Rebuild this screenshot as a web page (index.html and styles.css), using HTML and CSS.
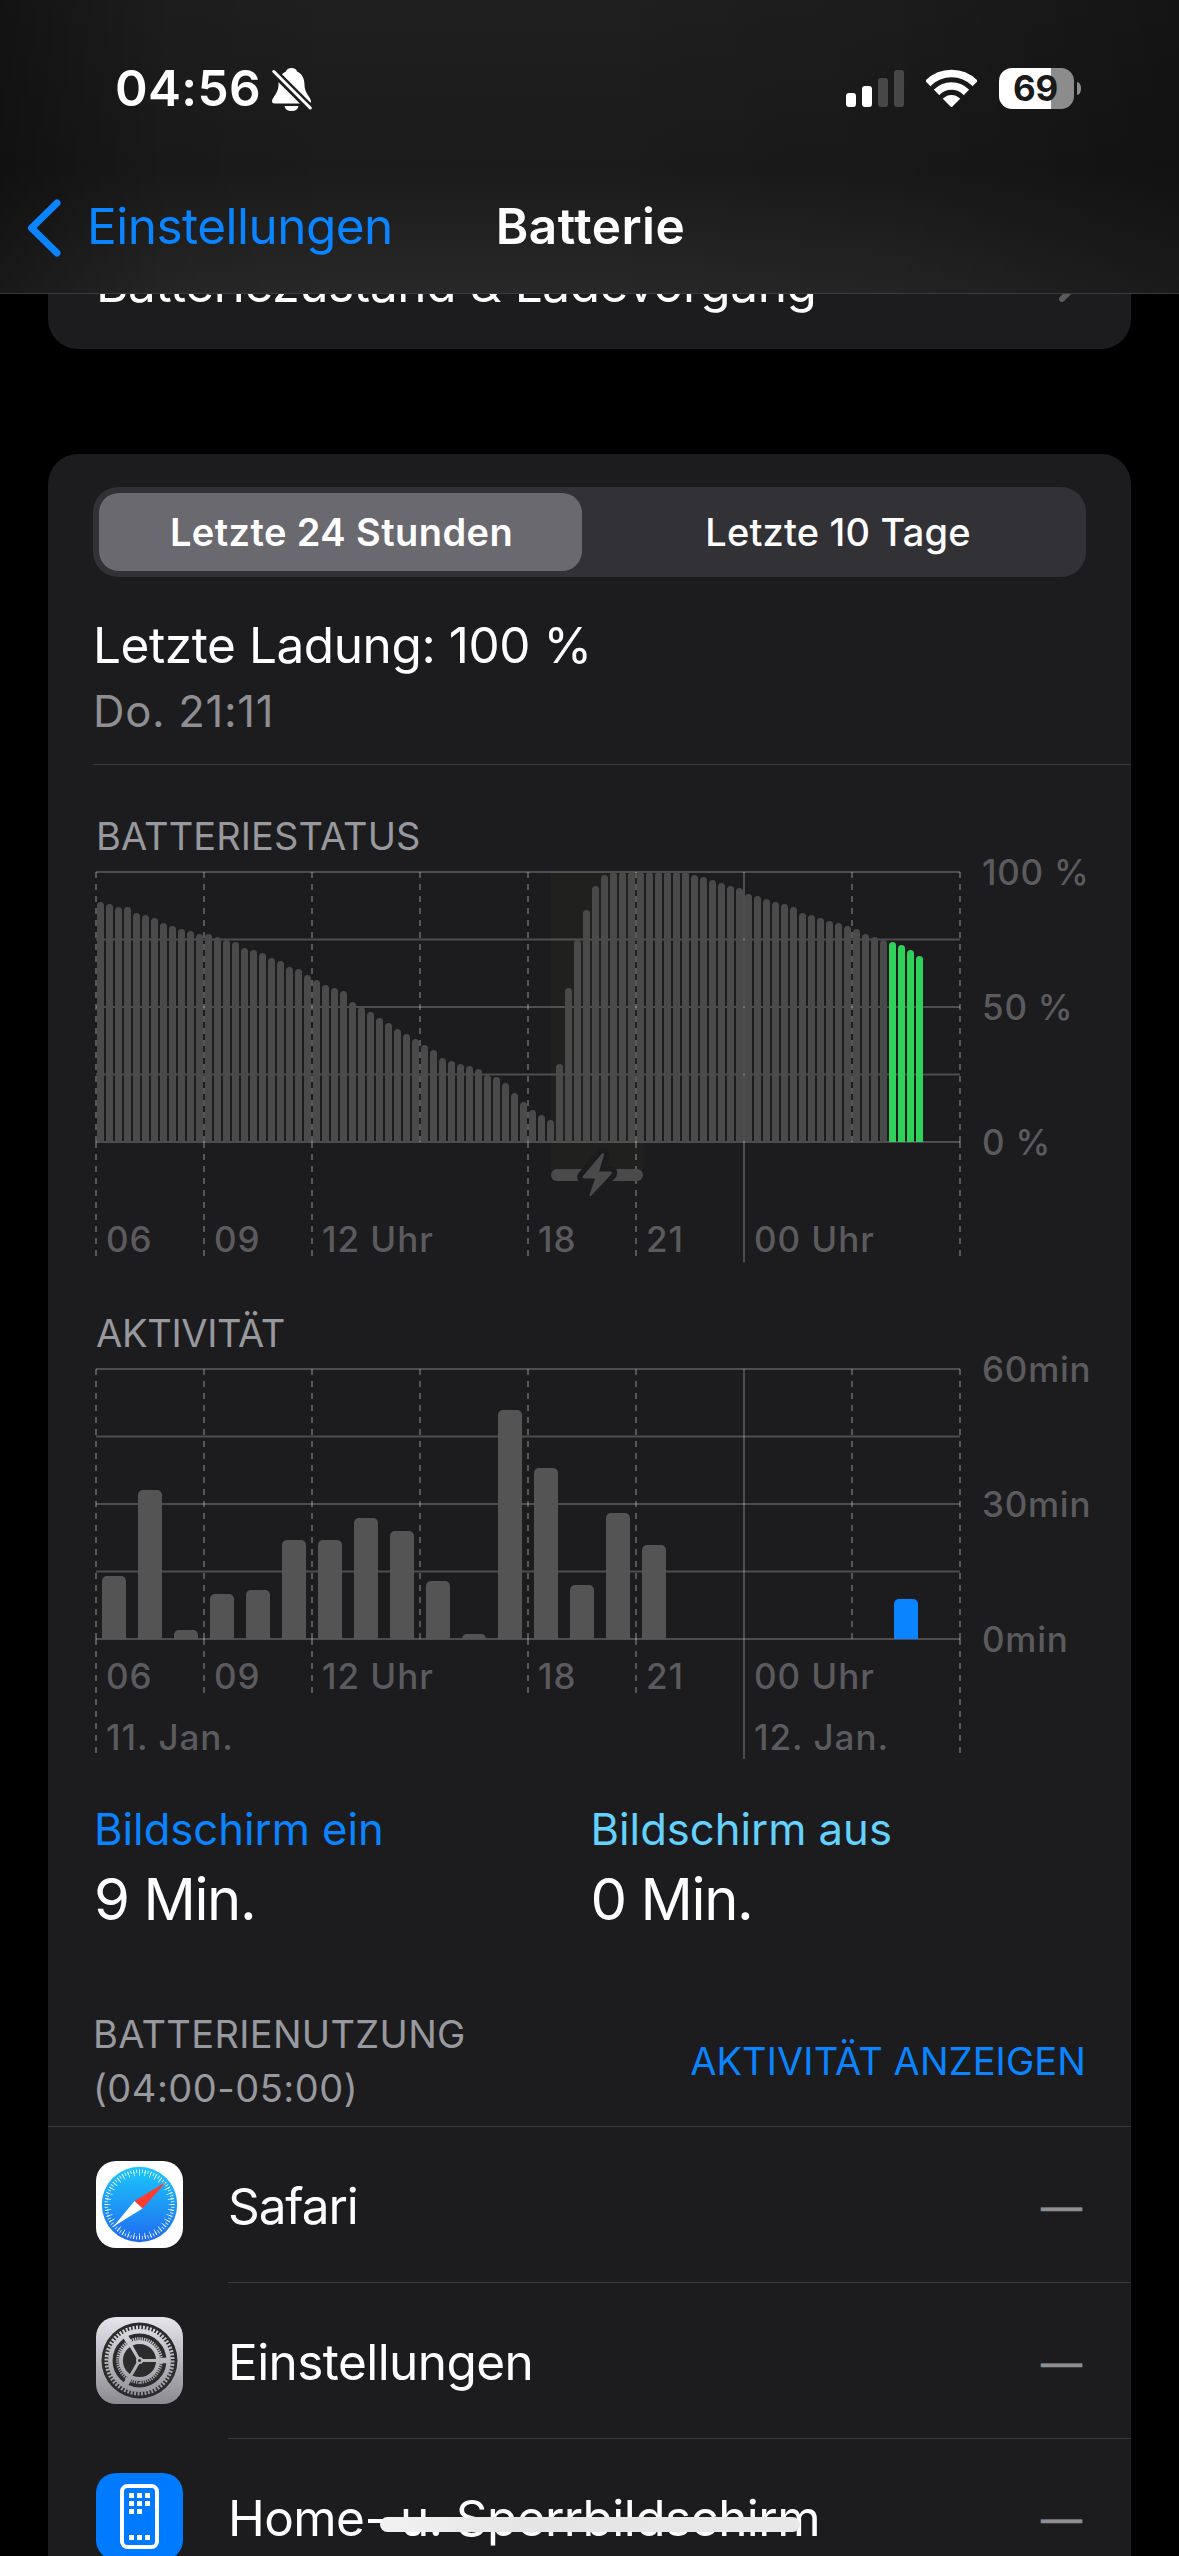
FILE: index.html
```
<!DOCTYPE html>
<html lang="de">
<head>
<meta charset="utf-8">
<title>Batterie</title>
<link rel="stylesheet" href="styles.css">
</head>
<body>
<div class="screen">
  <header class="header">
    <div class="status">
      <div class="status-left">
        <span class="clock">04:56</span>
        <svg class="bell" viewBox="0 0 40 43" width="40" height="43">
          <path fill="#fff" d="M19.5 0c-3 0-5 1.5-5.5 3.5C8.500 6 6.500 11 6.500 17c0 8-6 12-6.500 16q0 2.500 2.500 2.500h34q2.500 0 2.500-2.500c-.5-4-6.500-8-6.500-16 0-6-2-11-7.500-13.500C24.500 1.500 22.500 0 19.500 0z"/>
          <path fill="#fff" d="M12.500 38h14c-.5 3-3 5-7 5s-6.500-2-7-5z"/>
          <path stroke="#1d1d1d" stroke-width="8" d="M-1 1 41 43"/>
          <path stroke="#fff" stroke-width="3" stroke-linecap="round" d="M1.800 3.500 38.300 40"/>
        </svg>
      </div>
      <div class="status-right">
        <div class="signal"><i class="s1"></i><i class="s2"></i><i class="s3"></i><i class="s4"></i></div>
        <svg class="wifi" viewBox="0 0 51 38" width="51" height="38">
          <defs><clipPath id="fan"><path d="M25.500 38.500-14-1.500V-5h79v3.500z"/></clipPath></defs>
          <g clip-path="url(#fan)" fill="none" stroke="#fff" stroke-width="7.500">
            <circle cx="25.500" cy="37.500" r="33"/>
            <circle cx="25.500" cy="37.500" r="20.500"/>
            <circle cx="25.500" cy="37.500" r="11.500" fill="#fff" stroke="none"/>
          </g>
        </svg>
        <div class="battery"><span class="battery-body">69</span><span class="battery-cap"></span></div>
      </div>
    </div>
    <nav class="nav">
      <a class="back">
        <svg viewBox="0 0 34 58" width="34" height="58"><path d="M30 4 4.500 29 30 54" fill="none" stroke="#0a84ff" stroke-width="7" stroke-linecap="round" stroke-linejoin="round"/></svg>
        <span>Einstellungen</span>
      </a>
      <h1 class="title">Batterie</h1>
    </nav>
  </header>

  <main class="content">
    <section class="card health">
      <span class="health-label">Batteriezustand &amp; Ladevorgang</span>
      <svg viewBox="0 0 22 36" width="22" height="36"><path d="M3 3 18 18 3 33" fill="none" stroke="#5b5b5f" stroke-width="6" stroke-linecap="round" stroke-linejoin="round"/></svg>
    </section>

    <section class="card usage">
      <div class="segmented">
        <button class="segment active">Letzte 24 Stunden</button>
        <button class="segment">Letzte 10 Tage</button>
      </div>
      <div class="charge">
        <div class="charge-title">Letzte Ladung: 100 %</div>
        <div class="charge-time">Do. 21:11</div>
      </div>

      <h2 class="chart-title">BATTERIESTATUS</h2>
      <div class="chart">
        <div class="graph">
          <svg class="lines" viewBox="-1 -1 868 392" width="868" height="392">
            <rect x="455" y="0" width="92" height="298" fill="#20201f"/>
            <path class="rule" d="M0 0H864M0 67.500H864M0 135H864M0 202.500H864M0 270H864"/>
            <path class="dash" d="M0 0V270M108 0V270M216 0V270M324 0V270M432 0V270M540 0V270M756 0V270M864 0V270"/>
            <path class="dash" d="M0 270V384M108 270V384M216 270V384M432 270V384M540 270V384M864 270V384"/>
            <path class="rule" d="M648 0V390"/>
            <rect x="455" y="297" width="92" height="12" rx="6" fill="#4a4a4a"/>
            <path d="M506 281.500 487 304q-1 2 1 2.500H499L493.500 323q0 2 1.500 1L515.500 302q1-2-1-2.500H503L508 283q0-2.500-2-1.500z" fill="#4a4a4a" stroke="#1c1c1e" stroke-width="11" stroke-linejoin="round" paint-order="stroke"/>
          </svg>
          <div class="bars level">
            <i style="height:89%"></i><i style="height:88%"></i><i style="height:87%"></i><i style="height:87%"></i><i style="height:85%"></i><i style="height:84%"></i><i style="height:83%"></i><i style="height:81%"></i><i style="height:80%"></i><i style="height:79%"></i><i style="height:78%"></i><i style="height:77%"></i>
            <i style="height:77%"></i><i style="height:76%"></i><i style="height:75%"></i><i style="height:74%"></i><i style="height:72%"></i><i style="height:71%"></i><i style="height:70%"></i><i style="height:68%"></i><i style="height:67%"></i><i style="height:65%"></i><i style="height:64%"></i><i style="height:62%"></i>
            <i style="height:60%"></i><i style="height:58%"></i><i style="height:57%"></i><i style="height:56%"></i><i style="height:52%"></i><i style="height:50%"></i><i style="height:48%"></i><i style="height:46%"></i><i style="height:44%"></i><i style="height:42%"></i><i style="height:40%"></i><i style="height:38%"></i>
            <i style="height:36%"></i><i style="height:34%"></i><i style="height:31%"></i><i style="height:30%"></i><i style="height:29%"></i><i style="height:28%"></i><i style="height:27%"></i><i style="height:25%"></i><i style="height:24%"></i><i style="height:22%"></i><i style="height:18%"></i><i style="height:15%"></i>
            <i style="height:12%"></i><i style="height:10%"></i><i style="height:8%"></i><i style="height:29%"></i><i style="height:57%"></i><i style="height:75%"></i><i style="height:86%"></i><i style="height:95%"></i><i style="height:99%"></i><i style="height:100%"></i><i style="height:100%"></i><i style="height:100%"></i>
            <i style="height:100%"></i><i style="height:100%"></i><i style="height:100%"></i><i style="height:100%"></i><i style="height:100%"></i><i style="height:100%"></i><i style="height:99%"></i><i style="height:98%"></i><i style="height:97%"></i><i style="height:96%"></i><i style="height:95%"></i><i style="height:94%"></i>
            <i style="height:92%"></i><i style="height:91%"></i><i style="height:90%"></i><i style="height:89%"></i><i style="height:88%"></i><i style="height:87%"></i><i style="height:85%"></i><i style="height:84%"></i><i style="height:83%"></i><i style="height:82%"></i><i style="height:81%"></i><i style="height:80%"></i>
            <i style="height:79%"></i><i style="height:77%"></i><i style="height:76%"></i><i style="height:75%"></i><i class="now" style="height:74%"></i><i class="now" style="height:73%"></i><i class="now" style="height:71%"></i><i class="now" style="height:69%"></i>
          </div>
          <div class="axis axis-level">
            <span>06</span><span>09</span><span class="wide">12 Uhr</span><span>18</span><span>21</span><span class="wide">00 Uhr</span>
          </div>
        </div>
        <div class="scale"><span>100 %</span><span>50 %</span><span>0 %</span></div>
      </div>

      <h2 class="chart-title tight">AKTIVITÄT</h2>
      <div class="chart">
        <div class="graph">
          <svg class="lines" viewBox="-1 -1 868 392" width="868" height="392">
            <path class="rule" d="M0 0H864M0 67.500H864M0 135H864M0 202.500H864M0 270H864"/>
            <path class="dash" d="M0 0V270M108 0V270M216 0V270M324 0V270M432 0V270M540 0V270M756 0V270M864 0V270"/>
            <path class="dash" d="M0 270V384M108 270V324M216 270V324M432 270V324M540 270V324M864 270V384"/>
            <path class="rule" d="M648 0V390"/>
          </svg>
          <div class="bars activity">
            <i style="height:63px"></i><i style="height:149px"></i><i style="height:9px"></i><i style="height:45px"></i><i style="height:49px"></i><i style="height:99px"></i><i style="height:99px"></i><i style="height:121px"></i><i style="height:108px"></i><i style="height:58px"></i><i style="height:5px"></i><i style="height:229px"></i>
            <i style="height:171px"></i><i style="height:54px"></i><i style="height:126px"></i><i style="height:94px"></i><i style="height:0"></i><i style="height:0"></i><i style="height:0"></i><i style="height:0"></i><i style="height:0"></i><i style="height:0"></i><i class="now" style="height:40px"></i>
          </div>
          <div class="axis axis-activity">
            <span>06</span><span>09</span><span class="wide">12 Uhr</span><span>18</span><span>21</span><span class="wide">00 Uhr</span>
            <span class="day">11. Jan.</span><span class="wide">12. Jan.</span>
          </div>
        </div>
        <div class="scale"><span>60min</span><span>30min</span><span>0min</span></div>
      </div>

      <div class="stats">
        <div class="stat"><div class="stat-name on">Bildschirm ein</div><div class="stat-value">9 Min.</div></div>
        <div class="stat"><div class="stat-name off">Bildschirm aus</div><div class="stat-value">0 Min.</div></div>
      </div>

      <div class="list-head">
        <div class="list-title">BATTERIENUTZUNG<br><span class="hours">(04:00-05:00)</span></div>
        <a class="list-action">AKTIVITÄT ANZEIGEN</a>
      </div>

      <div class="row">
        <svg class="app" viewBox="0 0 87 87" width="87" height="87">
          <defs><linearGradient id="sky" x1="0" y1="0" x2="0" y2="1"><stop offset="0" stop-color="#1cc8fb"/><stop offset="1" stop-color="#1f6af0"/></linearGradient></defs>
          <rect width="87" height="87" rx="20" fill="#fff"/>
          <circle cx="43.500" cy="43.500" r="37.700" fill="url(#sky)"/>
          <g fill="none" stroke="#fff" stroke-opacity=".85">
            <circle cx="43.500" cy="43.500" r="33.300" stroke-width="3.500" pathLength="288" stroke-dasharray="1.200 2.800" stroke-dashoffset=".6"/>
            <circle cx="43.500" cy="43.500" r="31.800" stroke-width="6" pathLength="288" stroke-dasharray="1.200 6.800" stroke-dashoffset=".6"/>
          </g>
          <path fill="#ff3b30" d="M70 21 38.500 40 46.500 47.500z"/>
          <path fill="#fff" d="M17.500 65.500 38.500 40 46.500 47.500z"/>
        </svg>
        <div class="row-body"><span class="app-name safari">Safari</span><span class="value">—</span></div>
      </div>
      <div class="row">
        <svg class="app" viewBox="0 0 87 87" width="87" height="87">
          <defs><linearGradient id="steel" gradientUnits="userSpaceOnUse" x1="0" y1="0" x2="0" y2="87"><stop offset="0" stop-color="#e6e5eb"/><stop offset="1" stop-color="#8c8b91"/></linearGradient></defs>
          <rect width="87" height="87" rx="20" fill="url(#steel)"/>
          <circle cx="43.500" cy="43.500" r="38" fill="#2c2c2d"/>
          <g fill="none" stroke="url(#steel)">
            <circle cx="43.500" cy="43.500" r="29.200" stroke-width="4.500"/>
            <circle cx="43.500" cy="43.500" r="33" stroke-width="4" pathLength="240" stroke-dasharray="2.200 1.800"/>
            <circle cx="43.500" cy="43.500" r="18.600" stroke-width="4"/>
            <circle cx="43.500" cy="43.500" r="21.800" stroke-width="3" pathLength="240" stroke-dasharray="2.200 1.800"/>
            <path stroke-width="3.200" d="M43.500 43.500H72M43.500 43.500 29.200 18.700M43.500 43.500 29.200 68.300"/>
            <path stroke-width="5.500" d="M64 43.500H71M33.200 25.700 29.700 19.700M33.200 61.300 29.700 67.300"/>
          </g>
          <circle cx="43.500" cy="43.500" r="3.500" fill="url(#steel)"/>
          <circle cx="43.500" cy="43.500" r="1.500" fill="#2c2c2d"/>
        </svg>
        <div class="row-body"><span class="app-name">Einstellungen</span><span class="value">—</span></div>
      </div>
      <div class="row">
        <svg class="app" viewBox="0 0 87 87" width="87" height="87">
          <rect width="87" height="87" rx="20" fill="#007aff"/>
          <rect x="26" y="13" width="35" height="61" rx="5.500" fill="none" stroke="#fff" stroke-width="4"/>
          <path fill="#fff" d="M33 20h5v5h-5zM41 20h5v5h-5zM49 20h5v5h-5zM33 28h5v5h-5zM41 28h5v5h-5zM49 28h5v5h-5zM33 36h5v5h-5zM41 36h5v5h-5zM33 62h5v5h-5zM41 62h5v5h-5zM49 62h5v5h-5z"/>
        </svg>
        <div class="row-body"><span class="app-name">Home- u. Sperrbildschirm</span><span class="value">—</span></div>
      </div>
    </section>
  </main>
  <div class="home-indicator"></div>
</div>
</body>
</html>
```
FILE: styles.css
```
* { box-sizing: border-box; }
body { margin: 0; background: #000; color: #fff; font-family: Inter, "Liberation Sans", sans-serif; }
h1, h2 { margin: 0; }
svg { display: block; flex: none; }
.screen { position: relative; width: 1179px; height: 2556px; overflow: hidden; display: flex; flex-direction: column; }

/* status bar and navigation */
.header {
  flex: none; height: 294px; border-bottom: 1px solid #3a3a3b;
  background:
    linear-gradient(90deg, rgba(0,0,0,.38), rgba(0,0,0,.08) 14%, transparent 30%, transparent 50%, rgba(0,0,0,.1) 75%, rgba(0,0,0,.35)),
    linear-gradient(#1f1f1f, #1b1b1b 58%, #282828);
}
.status { height: 162px; padding: 14px 98px 0 115px; display: flex; justify-content: space-between; align-items: center; }
.status-left, .status-right { display: flex; align-items: center; }
.clock { font-size: 49.5px; font-weight: 600; letter-spacing: .34px; line-height: 60px; }
.bell { margin-left: 11px; margin-top: 2px; overflow: hidden; }
.signal { display: flex; align-items: flex-end; gap: 6px; height: 37px; }
.signal i { width: 10px; border-radius: 3px; background: #fff; }
.signal .s1 { height: 14px; }
.signal .s2 { height: 21px; }
.signal .s3 { height: 29px; background: #474747; }
.signal .s4 { height: 37px; background: #474747; }
.wifi { margin-left: 22px; }
.battery { margin-left: 22px; display: flex; align-items: center; gap: 3px; }
.battery-body {
  width: 75px; height: 41px; border-radius: 13px; padding-right: 2px;
  background: linear-gradient(90deg, #fff 52px, #8c8c8c 52px);
  color: #1a1a1a; font-size: 35px; font-weight: 700; line-height: 41px; text-align: center; letter-spacing: -.2px;
}
.battery-cap { width: 4px; height: 13px; border-radius: 0 4px 4px 0 / 0 6px 6px 0; background: #8c8c8c; }
.nav { height: 131px; display: grid; grid-template-columns: 1fr auto 1fr; align-items: center; }
.back { display: flex; align-items: center; gap: 26px; padding-left: 27px; color: #0a84ff; font-size: 49.5px; letter-spacing: -.53px; }
.back span { padding-bottom: 3px; }
.title { font-size: 49.5px; font-weight: 600; letter-spacing: .5px; padding: 0 0 3px 2px; }

/* scrolling content */
.content { flex: 1; min-height: 0; overflow: hidden; padding: 0 48px; display: flex; flex-direction: column; }
.card { flex: none; background: #1c1c1e; border-radius: 30px; }
.health { height: 132px; margin-top: -77px; padding: 2px 50px 0 48px; display: flex; align-items: center; justify-content: space-between; }
.health-label { font-size: 49.5px; letter-spacing: -.38px; }
.usage { margin-top: 105px; padding-top: 33px; height: 2300px; }
.segmented { margin: 0 45px; height: 90px; padding: 6px; border-radius: 25px; background: #323136; display: grid; grid-template-columns: 483px 1fr; }
.segment { border: 0; padding: 0 0 0 14px; background: none; border-radius: 20px; color: #fff; font: 500 38px/78px Inter, sans-serif; letter-spacing: .19px; }
.segment.active { padding-left: 2px; background: #6a696f; font-weight: 600; letter-spacing: .42px; }
.charge { margin: 35px 0 0 45px; padding-bottom: 24px; border-bottom: 1px solid #3b3b3e; }
.charge-title { font-size: 49.5px; line-height: 66px; letter-spacing: -.42px; }
.charge-time { margin-top: 6px; font-size: 43.6px; line-height: 56px; letter-spacing: .7px; color: #8e8e93; }

/* charts */
.chart-title { margin: 46px 0 0 48px; font-size: 38px; line-height: 50px; font-weight: 400; letter-spacing: .1px; color: #98989f; }
.chart-title.tight { letter-spacing: -.3px; }
.chart { margin: 11px 0 0 48px; display: grid; grid-template-columns: 864px auto; justify-content: start; }
.graph { position: relative; height: 390px; }
.lines { position: absolute; left: -1px; top: -1px; }
.rule { fill: none; stroke: #fff; stroke-opacity: .22; stroke-width: 2; }
.dash { fill: none; stroke: #fff; stroke-opacity: .26; stroke-width: 2; stroke-dasharray: 6 6; }
.bars { position: relative; height: 270px; display: flex; align-items: flex-end; }
.level { padding-left: 1px; gap: 2px; }
.level i { width: 7px; flex: none; background: #4a4a4a; border-radius: 3.5px 3.5px 0 0; }
.level .now { background: #30d158; }
.activity { padding-left: 6px; gap: 12px; }
.activity i { width: 24px; flex: none; background: #545454; border-radius: 5px 5px 0 0; }
.activity .now { background: #0a84ff; }
.axis { position: relative; display: grid; grid-template-columns: repeat(8, 108px); font-size: 35px; line-height: 50px; font-weight: 500; letter-spacing: .95px; color: #5b5b5f; row-gap: 11px; }
.axis span { padding-left: 10px; white-space: nowrap; }
.axis .wide { grid-column: span 2; }
.axis .day { grid-column: span 6; }
.axis-level { padding-top: 72px; }
.axis-activity { padding-top: 12px; }
.scale { height: 320px; margin-top: -25px; padding-left: 22px; display: flex; flex-direction: column; justify-content: space-between; font-size: 35px; line-height: 50px; font-weight: 500; letter-spacing: .75px; color: #5b5b5f; }

/* totals */
.stats { margin: 43px 44px 0 46px; display: grid; grid-template-columns: 1fr 1fr; }
.stat-name { font-size: 43.6px; line-height: 56px; }
.on { color: #0a84ff; }
.off { color: #64d2ff; }
.stat-value { margin-top: 6px; font-size: 58px; line-height: 70px; letter-spacing: -1.4px; }

/* app list */
.list-head { margin-top: 73px; padding: 0 45px 11px; border-bottom: 1px solid #3b3b3e; display: flex; justify-content: space-between; align-items: center; font-size: 38px; line-height: 54px; }
.list-title { color: #98989f; letter-spacing: .33px; }
.hours { letter-spacing: .5px; }
.list-action { color: #0a84ff; letter-spacing: .1px; }
.row { display: flex; align-items: center; gap: 45px; height: 156px; padding-left: 48px; }
.app { margin-bottom: 1px; }
.row-body { flex: 1; height: 156px; padding: 1px 49px 0 0; border-bottom: 1px solid #3b3b3e; display: flex; align-items: center; justify-content: space-between; }
.app-name { font-size: 49.5px; letter-spacing: -.57px; padding-top: 2px; }
.app-name.safari { letter-spacing: -1.1px; }
.value { font-size: 41px; color: #8e8e93; padding-top: 3px; -webkit-text-stroke: .5px #8e8e93; }

.home-indicator { position: absolute; left: 380px; top: 2517px; width: 420px; height: 15px; border-radius: 8px; background: linear-gradient(90deg, #f2f2f2, #e5e5e5 35%, #e8e8e8); }
```
